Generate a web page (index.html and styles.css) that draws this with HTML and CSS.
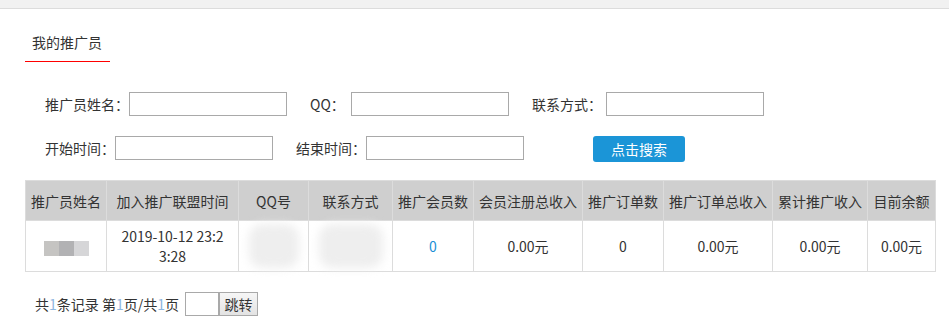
FILE: index.html
```html
<!DOCTYPE html>
<html lang="zh-CN">
<head>
    <meta charset="UTF-8">
    <meta name="viewport" content="width=device-width, initial-scale=1.0">
    <title>我的推广员</title>
    <link rel="stylesheet" href="styles.css">
</head>
<body>
    <div class="topbar"></div>
    <div class="container">
        <div class="tabs">
            <span class="tab active">我的推广员</span>
        </div>

        <div class="search-form">
            <div class="form-row">
                <div class="field">
                    <label>推广员姓名：</label>
                    <input type="text" class="txt">
                </div>
                <div class="field">
                    <label class="lbl-qq">QQ：</label>
                    <input type="text" class="txt">
                </div>
                <div class="field">
                    <label class="lbl-contact">联系方式：</label>
                    <input type="text" class="txt">
                </div>
            </div>
            <div class="form-row">
                <div class="field">
                    <label>开始时间：</label>
                    <input type="text" class="txt">
                </div>
                <div class="field">
                    <label>结束时间：</label>
                    <input type="text" class="txt">
                </div>
                <button class="btn-search">点击搜索</button>
            </div>
        </div>

        <table class="list">
            <colgroup>
                <col style="width:81px">
                <col style="width:132px">
                <col style="width:70px">
                <col style="width:84px">
                <col style="width:81px">
                <col style="width:109px">
                <col style="width:81px">
                <col style="width:109px">
                <col style="width:95px">
                <col style="width:68px">
            </colgroup>
            <thead>
                <tr>
                    <th>推广员姓名</th>
                    <th>加入推广联盟时间</th>
                    <th>QQ号</th>
                    <th>联系方式</th>
                    <th>推广会员数</th>
                    <th>会员注册总收入</th>
                    <th>推广订单数</th>
                    <th>推广订单总收入</th>
                    <th>累计推广收入</th>
                    <th>目前余额</th>
                </tr>
            </thead>
            <tbody>
                <tr>
                    <td><span class="mosaic"><i class="m1"></i><i class="m2"></i><i class="m3"></i></span></td>
                    <td class="time">2019-10-12 23:23:28</td>
                    <td><span class="blur"></span></td>
                    <td><span class="blur wide"></span></td>
                    <td><a href="#" class="num">0</a></td>
                    <td>0.00元</td>
                    <td>0</td>
                    <td>0.00元</td>
                    <td>0.00元</td>
                    <td>0.00元</td>
                </tr>
            </tbody>
        </table>

        <div class="pager">
            <span>共<em>1</em>条记录 第<em>1</em>页/共<em>1</em>页</span>
            <input type="text" class="page-input">
            <button class="btn-go">跳转</button>
        </div>
    </div>
</body>
</html>
```

FILE: styles.css
```css
body {
    font-family: "Noto Sans CJK SC", "Noto Sans", sans-serif;
    font-size: 14px;
    color: #333;
    margin: 0;
    padding: 0;
    background: #fff;
}
.topbar {
    height: 8px;
    background: #f1f1f1;
    border-bottom: 1px solid #dcdcdc;
}
.container {
    padding: 0 14px 0 25px;
}
.tabs {
    margin-top: 23px;
}
.tab {
    display: inline-block;
    line-height: 20px;
    padding: 0 8px 9px 7px;
    font-size: 14px;
}
.tab.active {
    border-bottom: 1px solid #ff0000;
}
.search-form {
    margin-top: 30px;
    padding-left: 20px;
}
.form-row {
    display: flex;
    align-items: flex-start;
    margin-bottom: 20px;
}
.form-row:last-child {
    margin-bottom: 18px;
}
.field {
    display: flex;
    align-items: center;
    margin-right: 23px;
}
.field label {
    line-height: 24px;
    white-space: nowrap;
}
.field .lbl-qq {
    width: 41px;
}
.field .lbl-contact {
    width: 74px;
}
.txt {
    width: 158px;
    height: 24px;
    box-sizing: border-box;
    border: 1px solid #a9a9a9;
    padding: 0 4px;
    margin: 0;
    font-family: inherit;
}
.btn-search {
    margin-left: 46px;
    width: 92px;
    height: 26px;
    border: none;
    border-radius: 3px;
    background: #1b95d7;
    color: #fff;
    font-family: inherit;
    font-size: 14px;
    cursor: pointer;
}
.list {
    border-collapse: collapse;
    table-layout: fixed;
    width: 910px;
}
.list th, .list td {
    border: 1px solid #dcdcdc;
    text-align: center;
    font-weight: normal;
    padding: 0 4px;
}
.list th {
    background: #cfcfcf;
    height: 39px;
    white-space: nowrap;
    padding: 0;
    font-size: 14px;
}
.list td {
    height: 50px;
    line-height: 20px;
    word-break: break-all;
}
.list td.time {
    padding: 0 9px;
}
.num {
    color: #1b8fd6;
    text-decoration: none;
}
.mosaic {
    display: inline-flex;
    vertical-align: middle;
}
.mosaic i {
    display: block;
    width: 15px;
    height: 15px;
}
.m1 { background: #c5c4c2; }
.m2 { background: #b2b2b4; }
.m3 { background: #d6d6d8; }
.blur {
    display: inline-block;
    width: 50px;
    height: 44px;
    background: #eeeeee;
    border-radius: 14px;
    filter: blur(5px);
    vertical-align: middle;
}
.blur.wide {
    width: 64px;
}
.pager {
    display: flex;
    align-items: center;
    margin-top: 20px;
    padding-left: 10px;
}
.pager em {
    font-style: normal;
    color: #8db6df;
}
.page-input {
    width: 34px;
    height: 24px;
    box-sizing: border-box;
    border: 1px solid #a9a9a9;
    margin: 0 0 0 6px;
}
.btn-go {
    width: 39px;
    height: 24px;
    border: 1px solid #a9a9a9;
    background: linear-gradient(#f6f6f6, #e3e3e3);
    font-family: inherit;
    font-size: 14px;
    color: #333;
    padding: 0;
    margin: 0;
}
```
